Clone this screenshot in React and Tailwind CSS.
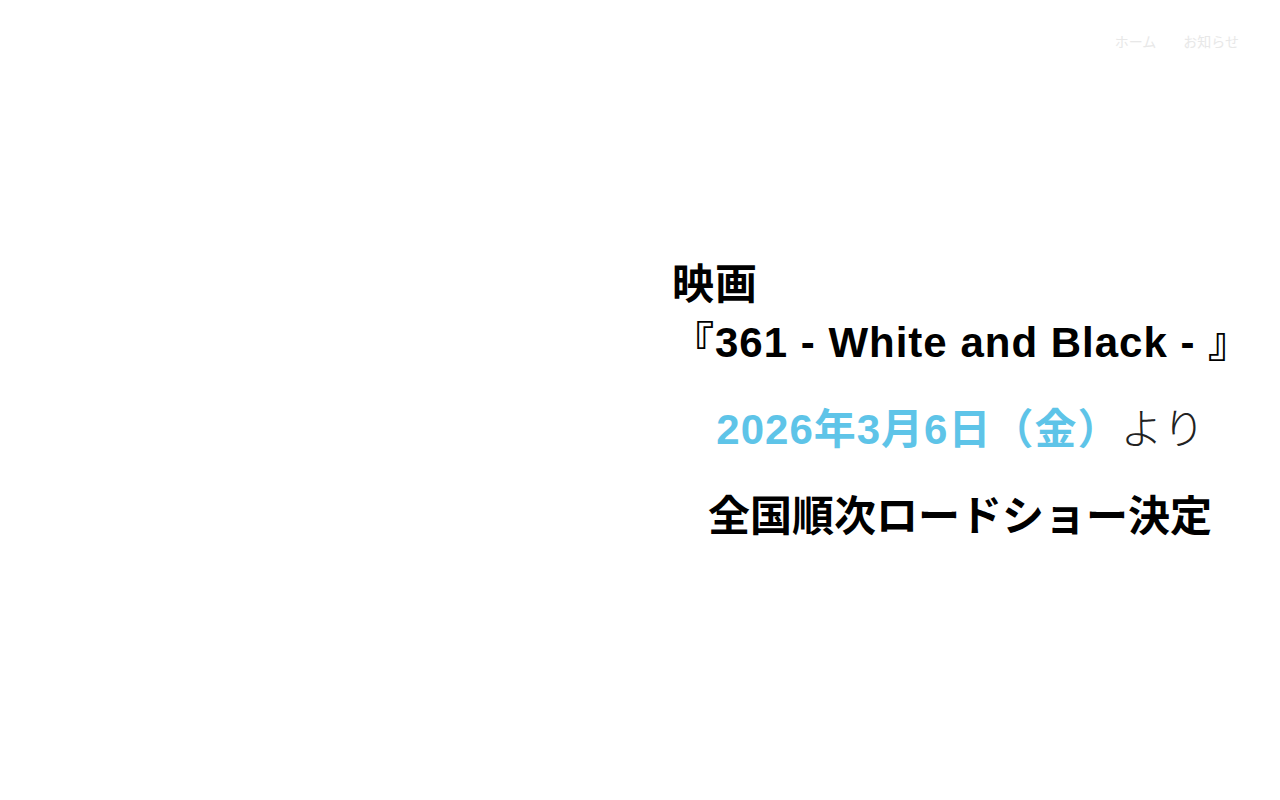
import React from 'react';

const jp = { fontFamily: '"Liberation Sans", "Noto Sans CJK JP", sans-serif' };

export default function App() {
  return (
    <div className="relative w-full h-[800px] bg-white overflow-hidden" style={jp}>
      {/* ナビ */}
      <nav className="absolute top-[32px] right-[41px] flex gap-[27px] text-[14px] text-[#e8e8e8]">
        <a href="#">ホーム</a>
        <a href="#">お知らせ</a>
      </nav>

      <div className="flex h-full">
        <div className="w-1/2" />
        <div className="w-1/2 flex flex-col justify-center pl-[32px] pr-[16px] pt-[20px] pb-[20px]">
          <h1 className="text-[42px] font-bold text-black leading-[60px] tracking-[1px]">
            <span className="block translate-y-[2px]">映画</span>
            『361 - White and Black - 』
          </h1>
          <p className="mt-[27px] text-center text-[42px] font-bold leading-[60px] tracking-[1px] text-[#5ec4e8] pr-[14px]">
            2026年3月6日（金）<span className="font-light text-[#222]">より</span>
          </p>
          <p className="mt-[27px] text-center text-[42px] font-bold leading-[60px] text-black pr-[16px]">
            全国順次ロードショー決定
          </p>
        </div>
      </div>
    </div>
  );
}
